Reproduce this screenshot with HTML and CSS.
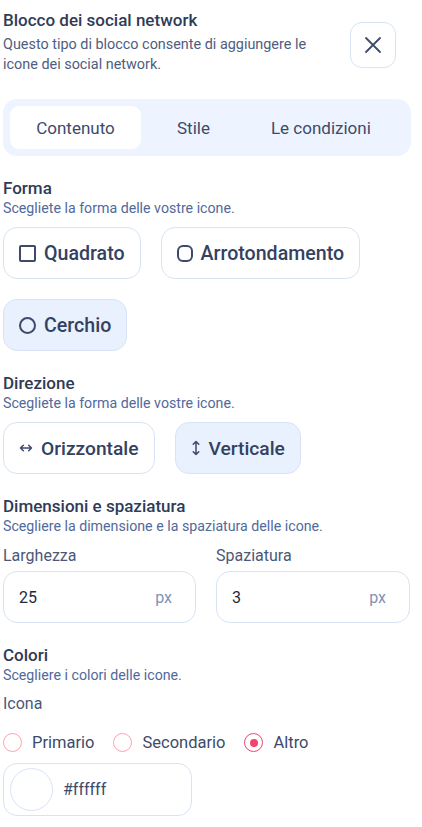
FILE: index.html
```html
<!DOCTYPE html>
<html lang="it">
<head>
<meta charset="utf-8">
<title>Blocco dei social network</title>
<link rel="stylesheet" href="styles.css">
</head>
<body>
<div class="panel">
  <header class="head">
    <div class="head-text">
      <h1 class="title">Blocco dei social network</h1>
      <p class="desc">Questo tipo di blocco consente di aggiungere le icone dei social network.</p>
    </div>
    <button class="close" aria-label="Chiudi">
      <svg width="18" height="18" viewBox="0 0 18 18" fill="none" stroke="#3d4a6b" stroke-width="1.8" stroke-linecap="round"><path d="M2 2L16 16M16 2L2 16"/></svg>
    </button>
  </header>

  <nav class="tabs">
    <span class="tab active">Contenuto</span>
    <span class="tab">Stile</span>
    <span class="tab">Le condizioni</span>
  </nav>

  <section class="section">
    <h2 class="sec-title">Forma</h2>
    <p class="sec-sub">Scegliete la forma delle vostre icone.</p>
    <div class="opts">
      <button class="opt"><span class="ic-square"></span>Quadrato</button>
      <button class="opt"><span class="ic-round"></span>Arrotondamento</button>
      <button class="opt selected"><span class="ic-circle"></span>Cerchio</button>
    </div>
  </section>

  <section class="section">
    <h2 class="sec-title">Direzione</h2>
    <p class="sec-sub">Scegliete la forma delle vostre icone.</p>
    <div class="opts">
      <button class="opt dir"><svg class="ic-arrow" width="14" height="10" viewBox="0 0 14 10" fill="none" stroke="#3d4a6b" stroke-width="1.5" stroke-linecap="round" stroke-linejoin="round"><path d="M1.5 5H12.5M4.3 2.2L1.5 5L4.3 7.8M9.7 2.2L12.5 5L9.7 7.8"/></svg>Orizzontale</button>
      <button class="opt dir selected"><svg class="ic-arrow" width="10" height="16" viewBox="0 0 10 16" fill="none" stroke="#3d4a6b" stroke-width="1.5" stroke-linecap="round" stroke-linejoin="round"><path d="M5 1.5V14.5M2.2 4.3L5 1.5L7.8 4.3M2.2 11.7L5 14.5L7.8 11.7"/></svg>Verticale</button>
    </div>
  </section>

  <section class="section">
    <h2 class="sec-title">Dimensioni e spaziatura</h2>
    <p class="sec-sub">Scegliere la dimensione e la spaziatura delle icone.</p>
    <div class="fields">
      <label class="field">
        <span class="field-label">Larghezza</span>
        <span class="input"><span class="val">25</span><span class="unit">px</span></span>
      </label>
      <label class="field">
        <span class="field-label">Spaziatura</span>
        <span class="input"><span class="val">3</span><span class="unit">px</span></span>
      </label>
    </div>
  </section>

  <section class="section">
    <h2 class="sec-title">Colori</h2>
    <p class="sec-sub">Scegliere i colori delle icone.</p>
    <div class="field-label icon-label">Icona</div>
    <div class="radios">
      <span class="radio"><span class="dot"></span>Primario</span>
      <span class="radio"><span class="dot"></span>Secondario</span>
      <span class="radio"><span class="dot on"></span>Altro</span>
    </div>
    <div class="color-input">
      <span class="swatch"></span>
      <span class="hex">#ffffff</span>
    </div>
  </section>
</div>
</body>
</html>
```
FILE: styles.css
```css
* { box-sizing: border-box; }
html, body { margin: 0; padding: 0; background: #fff; }
body {
  font-family: Roboto, "Noto Sans", sans-serif;
  color: #3d4a6b;
}
.panel {
  width: 408px;
  margin-left: 3px;
  padding-top: 10px;
}
.head {
  display: flex;
  align-items: flex-start;
  justify-content: space-between;
}
.head-text { width: 320px; }
.title {
  margin: 0;
  font-size: 17px;
  line-height: 20px;
  font-weight: 500;
  color: #2f3b57;
}
.desc {
  margin: 5px 0 0;
  font-size: 14.4px;
  line-height: 20px;
  color: #4e5d80;
}
.close {
  margin: 12px 15px 0 0;
  width: 46px;
  height: 46px;
  border: 1px solid #d8e3f5;
  border-radius: 12px;
  background: #fff;
  display: flex;
  align-items: center;
  justify-content: center;
  padding: 0;
}
.tabs {
  margin-top: 24px;
  background: #eef4ff;
  border-radius: 14px;
  padding: 7px;
  display: flex;
  gap: 11px;
}
.tab {
  height: 43px;
  padding: 0 25px;
  display: flex;
  align-items: center;
  font-size: 17px;
  color: #3d4a6b;
  border-radius: 9px;
}
.tab.active {
  background: #fff;
  width: 131px;
  justify-content: center;
}
.section { margin-top: 22px; }
.sec-title {
  margin: 0;
  font-size: 17px;
  line-height: 20px;
  font-weight: 500;
  color: #2f3b57;
}
.sec-sub {
  margin: 1px 0 0;
  font-size: 14.2px;
  line-height: 18px;
  color: #52699a;
}
.opts {
  margin-top: 10px;
  display: flex;
  flex-wrap: wrap;
  gap: 20px;
}
.opt {
  height: 52px;
  padding: 0 15px;
  border: 1px solid #d8e3f5;
  border-radius: 14px;
  background: #fff;
  display: flex;
  align-items: center;
  gap: 8px;
  font-family: inherit;
  font-size: 19.6px;
  font-weight: 500;
  color: #34415f;
}
.opt.dir { font-size: 19.2px; }
.opt.selected { background: #e9f1ff; }
.ic-square {
  width: 17px; height: 17px;
  border: 2px solid #3d4a6b;
  border-radius: 2px;
}
.ic-round {
  width: 16px; height: 17px;
  border: 2px solid #3d4a6b;
  border-radius: 6px;
}
.ic-circle {
  width: 17px; height: 17px;
  border: 2px solid #3d4a6b;
  border-radius: 50%;
}
.ic-arrow { flex: none; }
.fields {
  margin-top: 11px;
  display: grid;
  grid-template-columns: 193px 194px;
  gap: 20px;
}
.field { display: flex; flex-direction: column; }
.field-label {
  font-size: 16px;
  line-height: 20px;
  color: #4a5878;
}
.input {
  margin-top: 5px;
  height: 52px;
  border: 1px solid #d8e3f5;
  border-radius: 14px;
  display: flex;
  align-items: center;
  justify-content: space-between;
  padding: 0 23px 0 15px;
  font-size: 16px;
}
.val { color: #1f2940; }
.unit { color: #8193b8; }
.icon-label { margin-top: 10px; }
.radios {
  margin-top: 19px;
  display: flex;
  gap: 19px;
  align-items: center;
}
.radio {
  display: flex;
  align-items: center;
  gap: 10px;
  font-size: 16.5px;
  color: #3d4a6b;
}
.dot {
  width: 19px; height: 19px;
  border-radius: 50%;
  border: 1.5px solid #f6a6b4;
  display: flex;
  align-items: center;
  justify-content: center;
}
.dot.on { border-color: #f0456c; }
.dot.on::after {
  content: "";
  width: 8px; height: 8px;
  border-radius: 50%;
  background: #f0456c;
}
.color-input {
  margin-top: 11px;
  width: 189px;
  height: 53px;
  border: 1px solid #d8e3f5;
  border-radius: 14px;
  display: flex;
  align-items: center;
  padding-left: 6px;
  gap: 10px;
}
.swatch {
  width: 43px; height: 43px;
  border-radius: 50%;
  border: 1px solid #d8e3f5;
  background: #fff;
}
.hex { font-size: 16px; color: #3d4a6b; }
```
